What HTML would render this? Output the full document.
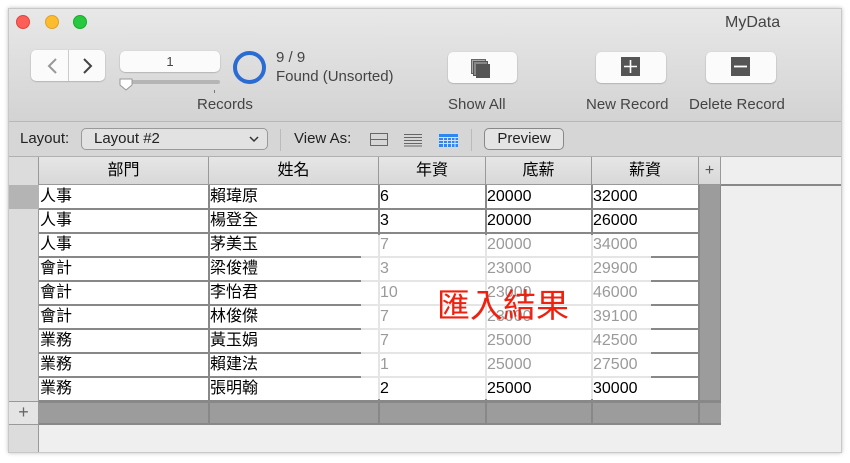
<!DOCTYPE html>
<html><head><meta charset="utf-8"><style>
*{margin:0;padding:0;box-sizing:border-box}
body{width:850px;height:463px;background:#fff;position:relative;overflow:hidden;font-family:"Liberation Sans","Noto Sans CJK TC",sans-serif;color:#333}
.win{position:absolute;left:8px;top:8px;width:834px;height:445px;background:#efefef;border:1px solid #c8c8c8;box-shadow:0 0 4px rgba(0,0,0,.25);overflow:hidden}
.tb{position:absolute;left:0;top:0;width:100%;height:113px;background:linear-gradient(#e8e8e8,#d3d3d3);border-bottom:1px solid #b8b8b8}
.dot{position:absolute;top:6px;width:14px;height:14px;border-radius:50%}
.btn{position:absolute;background:#fbfbfb;border-radius:5px;box-shadow:0 0.5px 1.5px rgba(0,0,0,.3)}
.lbl{position:absolute;font-size:15px;color:#444}
.lb{position:absolute;left:0;top:113px;width:100%;height:35px;background:#d6d6d6;border-bottom:1px solid #b0b0b0}
.cell{position:absolute;font-size:16px;color:#000;white-space:nowrap;line-height:24px;padding-left:0}
.hd{position:absolute;top:148px;height:28px;background:linear-gradient(#e6e6e6,#d8d8d8);border-right:1px solid #999;border-bottom:1px solid #999;text-align:center;font-size:16px;line-height:27px;color:#000}
</style></head><body>
<div class="win">
 <div class="tb">
  <div class="dot" style="left:7px;background:#fc5f57;border:1px solid #e0443e"></div>
  <div class="dot" style="left:36px;background:#fdbc2e;border:1px solid #dea123"></div>
  <div class="dot" style="left:64px;background:#28c840;border:1px solid #1aab29"></div>
  <div style="position:absolute;left:716px;top:5px;font-size:16px;color:#444">MyData</div>
  <div class="btn" style="left:22px;top:41px;width:74px;height:31px"></div>
  <div style="position:absolute;left:59px;top:41px;width:1px;height:31px;background:#ccc"></div>
  <svg style="position:absolute;left:36px;top:48px" width="50" height="18"><path d="M11 2 L4 9 L11 16" stroke="#999" stroke-width="2" fill="none"/><path d="M39 2 L46 9 L39 16" stroke="#444" stroke-width="2" fill="none"/></svg>
  <div class="btn" style="left:111px;top:42px;width:100px;height:21px;text-align:center;font-size:13px;line-height:21px;color:#444">1</div>
  <div style="position:absolute;left:111px;top:71px;width:100px;height:4px;background:#b5b5b5;border-radius:2px"></div>
  <svg style="position:absolute;left:110px;top:69px" width="16" height="14"><path d="M1 1 H13 V7 L7 12 L1 7 Z" fill="#fff" stroke="#999"/></svg>
  <div style="position:absolute;left:205px;top:81px;width:1px;height:3px;background:#777"></div>
  <div style="position:absolute;left:224px;top:42px;width:33px;height:33px;border:4px solid #2b6bd4;border-radius:50%"></div>
  <div class="lbl" style="left:267px;top:40px">9 / 9</div>
  <div class="lbl" style="left:267px;top:59px">Found (Unsorted)</div>
  <div class="lbl" style="left:188px;top:87px">Records</div>
  <div class="btn" style="left:439px;top:43px;width:69px;height:31px"></div>
  <svg style="position:absolute;left:462px;top:50px" width="24" height="24"><rect x="0.5" y="0.5" width="14" height="14" fill="#aaa" stroke="#666"/><rect x="2.5" y="2.5" width="14" height="14" fill="#888" stroke="#555"/><rect x="5" y="5" width="14" height="14" fill="#555"/></svg>
  <div class="lbl" style="left:439px;top:87px">Show All</div>
  <div class="btn" style="left:587px;top:43px;width:70px;height:31px"></div>
  <svg style="position:absolute;left:612px;top:48px" width="19" height="19"><rect width="19" height="19" fill="#555"/><path d="M9.5 3V16M3 9.5H16" stroke="#fff" stroke-width="1.6"/></svg>
  <div class="lbl" style="left:577px;top:87px">New Record</div>
  <div class="btn" style="left:697px;top:43px;width:70px;height:31px"></div>
  <svg style="position:absolute;left:722px;top:48px" width="19" height="19"><rect width="19" height="19" fill="#555"/><path d="M3 9.5H16" stroke="#fff" stroke-width="1.8"/></svg>
  <div class="lbl" style="left:680px;top:87px">Delete Record</div>
 </div>
 <div class="lb">
  <div class="lbl" style="left:11px;top:8px;color:#222">Layout:</div>
  <div style="position:absolute;left:72px;top:6px;width:187px;height:22px;border:1px solid #999;border-radius:5px;background:#e2e2e2"></div>
  <div class="lbl" style="left:85px;top:8px;color:#222">Layout #2</div>
  <svg style="position:absolute;left:240px;top:14px" width="10" height="7"><path d="M1 1L5 5L9 1" stroke="#333" stroke-width="1.5" fill="none"/></svg>
  <div style="position:absolute;left:271px;top:7px;width:1px;height:22px;background:#bbb"></div>
  <div class="lbl" style="left:285px;top:8px;color:#222">View As:</div>
  <svg style="position:absolute;left:361px;top:11px" width="20" height="14"><rect x="0.5" y="0.5" width="17" height="12" fill="none" stroke="#666"/><path d="M0 6.5H18" stroke="#666"/></svg>
  <svg style="position:absolute;left:394px;top:11px" width="20" height="14"><path d="M1 1.5H19M1 4.5H19M1 7.5H19M1 10.5H19M1 13H19" stroke="#666"/></svg>
  <svg style="position:absolute;left:430px;top:12px" width="20" height="14"><rect x="0" y="0" width="19" height="13" fill="#2f86f0"/><path d="M0 3.5H19M0 6.5H19M0 9.5H19M4.5 3V13M8.5 3V13M12.5 3V13M16 3V13" stroke="#cfe3ff" stroke-width="1"/></svg>
  <div style="position:absolute;left:462px;top:7px;width:1px;height:22px;background:#bbb"></div>
  <div style="position:absolute;left:475px;top:6px;width:80px;height:22px;border:1px solid #888;border-radius:5px;background:#e4e4e4;text-align:center;font-size:15px;line-height:20px;color:#222">Preview</div>
 </div>
 <div style="position:absolute;left:0;top:148px;width:30px;height:297px;background:#dcdcdc;border-right:1px solid #999"></div>
 <div style="position:absolute;left:0;top:176px;width:30px;height:24px;background:#b4b4b4"></div>
 <div class="hd" style="left:30px;width:170px">部門</div>
 <div class="hd" style="left:200px;width:170px">姓名</div>
 <div class="hd" style="left:370px;width:107px">年資</div>
 <div class="hd" style="left:477px;width:106px">底薪</div>
 <div class="hd" style="left:583px;width:107px">薪資</div>
 <div class="hd" style="left:690px;width:22px;font-size:16px;color:#555">+</div>
 <div style="position:absolute;left:712px;top:175px;width:122px;height:2px;background:#888"></div>
 <div style="position:absolute;left:30px;top:176px;width:660px;height:216px;background:#fff"></div>
 <div style="position:absolute;left:690px;top:176px;width:22px;height:240px;background:#9c9c9c;border-right:1px solid #888"></div>
 <div style="position:absolute;left:30px;top:392px;width:682px;height:24px;background:#9c9c9c;border-top:2px solid #888;border-bottom:2px solid #888"></div>
 <div style="position:absolute;left:0;top:392px;width:30px;height:24px;background:#e4e4e4;border-top:1px solid #999;border-bottom:1px solid #999;border-right:1px solid #999;text-align:center;font-size:18px;line-height:21px;color:#666">+</div>
 <svg style="position:absolute;left:30px;top:176px" width="682" height="240">
  <g stroke="#888" stroke-width="2">
   <path d="M0 24H660M0 48H660M0 72H660M0 96H660M0 120H660M0 144H660M0 168H660M0 192H660M0 216H682"/>
   <path d="M170 0V240M340 0V240M447 0V240M553 0V240M660 0V240"/>
  </g>
  <rect x="322" y="50" width="290" height="164" fill="rgba(255,255,255,0.78)"/>
 </svg>
 <div id="cells"></div>
 <div style="position:absolute;left:428px;top:270px;font-size:33px;color:#f0200f;font-family:'Noto Sans CJK TC',sans-serif">匯入結果</div>
</div>
<script>
var d=[["人事","賴瑋原","6","20000","32000"],["人事","楊登全","3","20000","26000"],["人事","茅美玉","7","20000","34000"],["會計","梁俊禮","3","23000","29900"],["會計","李怡君","10","23000","46000"],["會計","林俊傑","7","23000","39100"],["業務","黃玉娟","7","25000","42500"],["業務","賴建法","1","25000","27500"],["業務","張明翰","2","25000","30000"]];
var xs=[31,201,371,478,584],h="";
d.forEach(function(r,i){r.forEach(function(v,j){var g=(i>=2&&i<=7&&j>=2);h+='<div class="cell" style="left:'+xs[j]+'px;top:'+(176+i*24)+'px;'+(g?'color:#9a9a9a':'')+'">'+v+'</div>';});});
document.getElementById("cells").innerHTML=h;
</script>
</body></html>
